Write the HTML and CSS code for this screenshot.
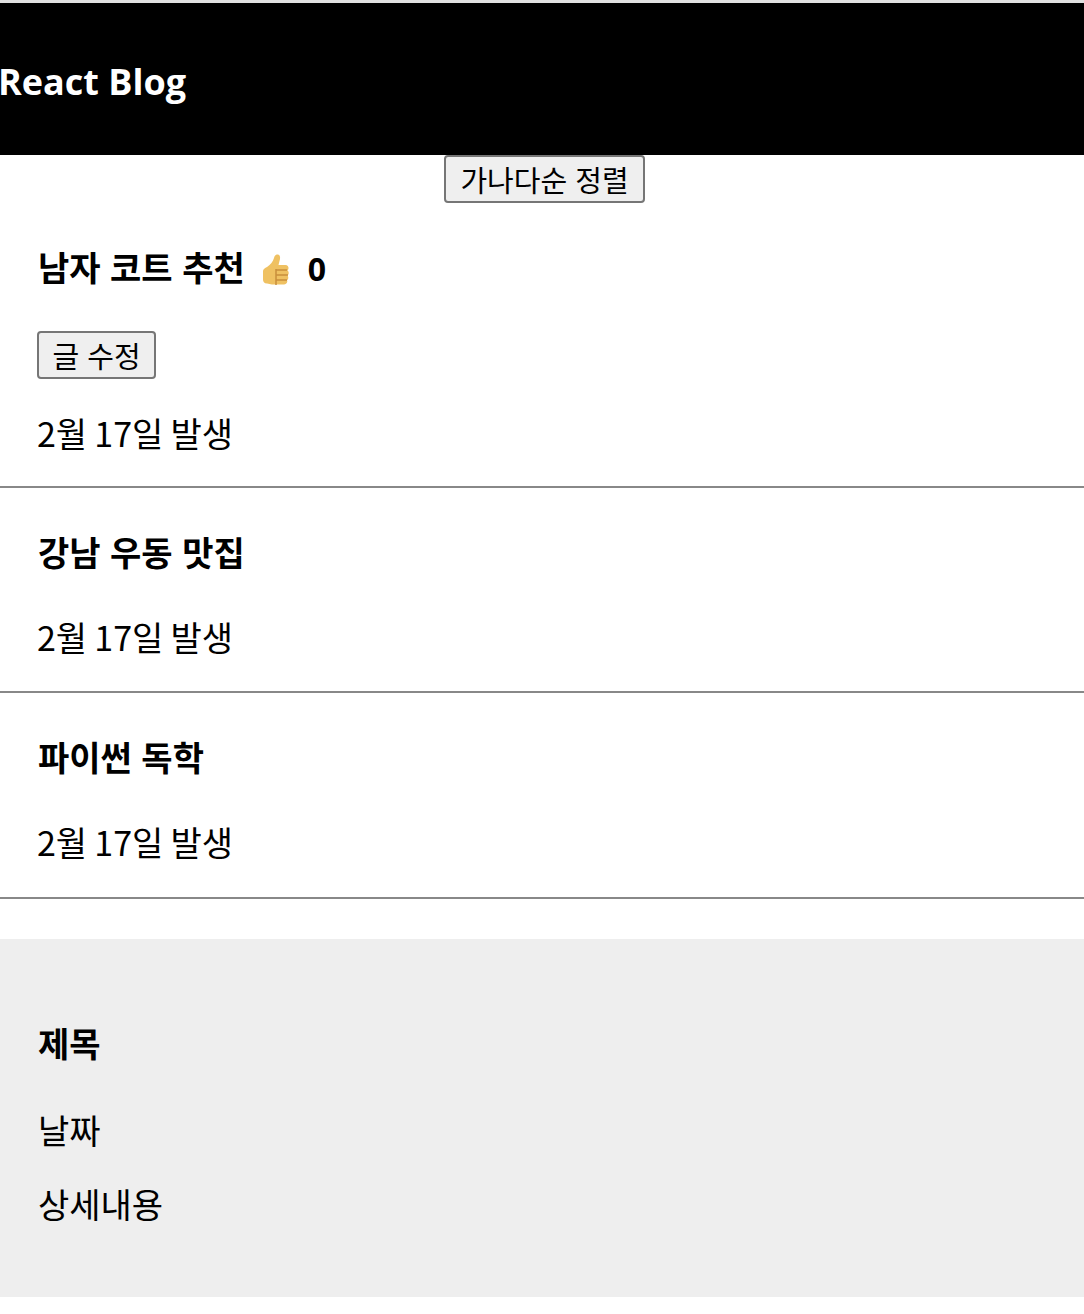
FILE: index.html
```html
<!DOCTYPE html>
<html lang="ko">
<head>
  <meta charset="UTF-8" />
  <title>React Blog</title>
  <link rel="stylesheet" href="styles.css">
</head>
<body>
  <div class="App">
    <div class="black-nav">
      <h4>React Blog</h4>
    </div>
    <div class="sort-row">
      <button class="sort-btn">가나다순 정렬</button>
    </div>
    <div class="list">
      <h4>남자 코트 추천 <svg class="thumb" viewBox="0 0 28 33" width="28" height="33"><path fill="#efc162" d="M1 17c0-2 2-3 4-4 3-2 6-5 7-9 .5-2 1.500-3.500 3.500-3.500s3 2 2.500 4.500l-1.500 6h7c2 0 3 1.500 3 3 0 1-.5 2-1 2.500.8.500 1.200 1.500 1.200 2.500s-.5 2-1.200 2.500c.5.500.8 1.500.8 2.300 0 1-.5 2-1.300 2.400.3.600.4 1.200.2 1.900-.4 1.500-1.700 2.400-3.200 2.400H10c-2 0-3-1-5-1-3 0-4-2-4-4z"/><path fill="none" stroke="#c98f3c" stroke-width="1.500" d="M14 15v16M14 16h11M14 21h12M14 26h11"/></svg> <span class="count">0</span></h4>
      <button class="edit-btn">글 수정</button>
      <p>2월 17일 발생</p>
    </div>
    <div class="list">
      <h4>강남 우동 맛집</h4>
      <p>2월 17일 발생</p>
    </div>
    <div class="list">
      <h4>파이썬 독학</h4>
      <p>2월 17일 발생</p>
    </div>
    <div class="modal">
      <h4>제목</h4>
      <p>날짜</p>
      <p>상세내용</p>
    </div>
  </div>
</body>
</html>
```

FILE: styles.css
```css
body {
  margin: 0;
  padding: 0;
  font-family: "Noto Sans CJK KR", "Noto Sans", sans-serif;
  font-size: 34px;
  color: #000;
  background: #fff;
  border-top: 3px solid #e0e0e0;
}
.App {
  text-align: center;
}
.black-nav {
  display: flex;
  align-items: center;
  height: 152px;
  background: #000;
  color: #fff;
  font-family: "Open Sans", "Noto Sans CJK KR", sans-serif;
  text-align: left;
}
.black-nav h4 {
  margin: 4px 0 0 -2px;
  font-size: 36px;
}
button {
  font-family: inherit;
  font-size: 29px;
  line-height: 40px;
  padding: 2px 14px;
  background: #efefef;
  border: 2px solid #767676;
  border-radius: 4px;
  color: #000;
}
.sort-row {
  display: flex;
  justify-content: center;
  padding-left: 5px;
}
.sort-btn {
  height: 48px;
  padding: 2px 14.5px;
}
.list {
  text-align: left;
  padding: 0 37px;
  border-bottom: 2px solid #888;
}
.list h4 {
  margin: 0 0 7px 1px;
  padding-top: 40px;
  line-height: 48px;
  font-weight: bold;
  white-space: nowrap;
}
.thumb {
  vertical-align: 2px;
  margin: -17px 8px -8px;
}
.count {
  font-family: "Open Sans", sans-serif;
  font-size: 32px;
}
.edit-btn {
  display: block;
  margin-top: 38px;
  height: 48px;
  padding: 2px 13.5px;
}
.list p {
  margin: 0;
  padding: 30px 0 30.5px;
  line-height: 48px;
  word-spacing: -2px;
  letter-spacing: -0.1px;
}
.list .edit-btn + p {
  padding-bottom: 28.5px;
}
.modal {
  margin-top: 40px;
  padding: 80px 38px 43px;
  background: #eee;
  text-align: left;
}
.modal h4 {
  margin: 0 0 39px;
  line-height: 48px;
}
.modal p {
  margin: 0 0 26px;
  line-height: 48px;
}
```
